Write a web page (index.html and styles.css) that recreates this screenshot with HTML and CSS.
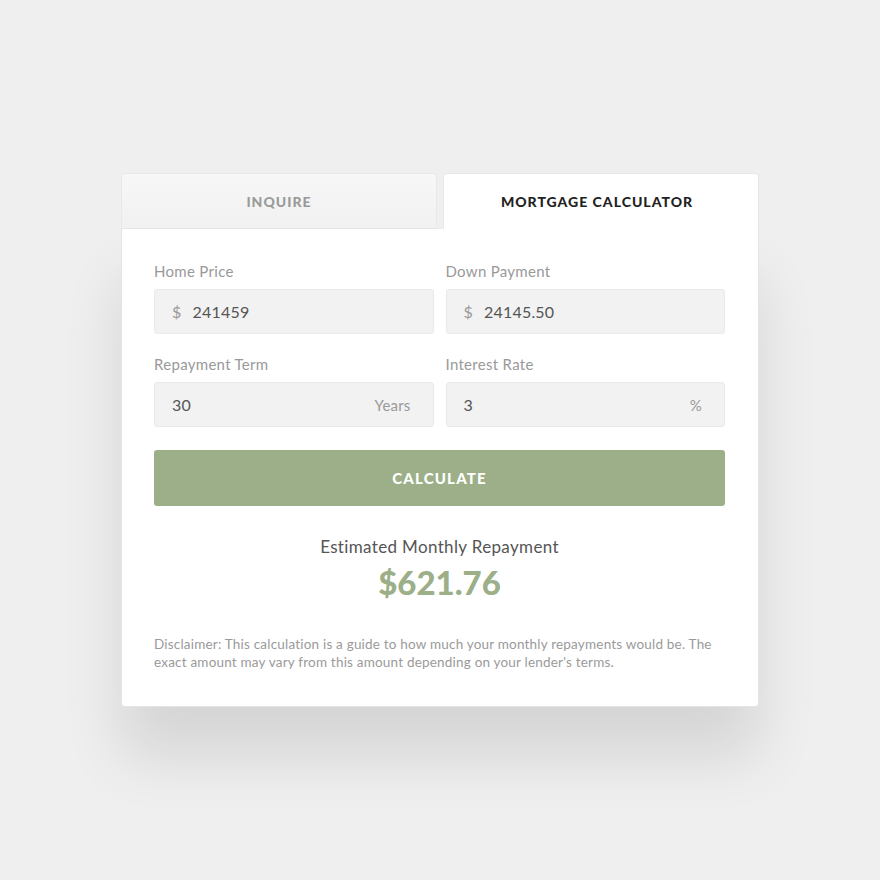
FILE: index.html
```html
<!DOCTYPE html>
<html>
<head>
<meta charset="utf-8">
<link rel="stylesheet" href="styles.css">
</head>
<body>
<div class="page">
  <div class="card">
    <div class="tabs">
      <div class="tab tab-inactive">INQUIRE</div>
      <div class="tab tab-active"><span class="tab-text">MORTGAGE CALCULATOR</span></div>
    </div>
    <div class="body">
      <div class="grid">
        <div class="field">
          <div class="label">Home Price</div>
          <div class="input"><span class="prefix">$</span><span class="value">241459</span></div>
        </div>
        <div class="field">
          <div class="label">Down Payment</div>
          <div class="input"><span class="prefix">$</span><span class="value">24145.50</span></div>
        </div>
        <div class="field">
          <div class="label">Repayment Term</div>
          <div class="input"><span class="value grow">30</span><span class="suffix">Years</span></div>
        </div>
        <div class="field">
          <div class="label">Interest Rate</div>
          <div class="input"><span class="value grow">3</span><span class="suffix">%</span></div>
        </div>
      </div>
      <button class="calc">CALCULATE</button>
      <div class="result">
        <div class="result-label">Estimated Monthly Repayment</div>
        <div class="result-value">$621.76</div>
      </div>
      <p class="disclaimer">Disclaimer: This calculation is a guide to how much your monthly repayments would be. The exact amount may vary from this amount depending on your lender's terms.</p>
    </div>
  </div>
</div>
</body>
</html>
```
FILE: styles.css
```css
* { box-sizing: border-box; }
html, body { margin: 0; padding: 0; }
body {
  background: #efefef;
  font-family: Lato, "Open Sans", sans-serif;
  width: 880px;
  height: 880px;
  overflow: hidden;
}
.page {
  padding-top: 173px;
  display: flex;
  justify-content: center;
}
.card {
  width: 638px;
}
.tabs {
  display: flex;
  gap: 6px;
  height: 56px;
}
.tab {
  flex: none;
  width: 316px;
  display: flex;
  align-items: center;
  justify-content: center;
  font-weight: 900;
  font-size: 14px;
  letter-spacing: 1px;
  border-radius: 4px 4px 0 0;
}
.tab-inactive {
  background: linear-gradient(#f7f7f7, #f1f1f1);
  color: #9a9a9a;
  border: 1px solid #e9e9e9;
  border-bottom: 1px solid #e4e4e4;
}
.tab-active {
  background: #fff;
  color: #222;
  border: 1px solid #e6e6e6;
  border-bottom: none;
}
.tab-text {
  margin-right: 8px;
}
.body {
  background: #fff;
  border: 1px solid #e4e4e4;
  border-top: none;
  border-radius: 0 0 4px 4px;
  padding: 33px 33px 35px 32px;
  box-shadow: 0 50px 60px rgba(0, 0, 0, 0.11);
}
.grid {
  display: grid;
  grid-template-columns: 1fr 1fr;
  column-gap: 12px;
  row-gap: 21px;
}
.label {
  font-size: 15px;
  line-height: 18px;
  letter-spacing: 0.3px;
  color: #999;
  margin-bottom: 9px;
}
.input {
  height: 45px;
  background: #f2f2f2;
  border: 1px solid #eaeaea;
  border-radius: 3px;
  display: flex;
  align-items: center;
  padding: 0 22px 0 17px;
  font-size: 16px;
  color: #555;
  letter-spacing: 0.2px;
}
.prefix {
  color: #999;
  margin-right: 11px;
}
.grow { flex: 1; }
.suffix {
  color: #999;
  font-size: 15px;
}
.calc {
  display: block;
  width: 100%;
  height: 56px;
  margin-top: 23px;
  border: none;
  border-radius: 3px;
  background: #9caf88;
  color: #fff;
  font-family: Lato, sans-serif;
  font-weight: 900;
  font-size: 15px;
  letter-spacing: 1.2px;
}
.result {
  text-align: center;
  margin-top: 31px;
}
.result-label {
  font-size: 17px;
  line-height: 20px;
  letter-spacing: 0.35px;
  color: #555;
}
.result-value {
  font-size: 33px;
  line-height: 40px;
  font-weight: 900;
  color: #9caf88;
  margin-top: 5px;
}
.disclaimer {
  margin: 33px 0 0;
  font-size: 13.5px;
  line-height: 18px;
  letter-spacing: 0.2px;
  color: #9a9a9a;
}
```
